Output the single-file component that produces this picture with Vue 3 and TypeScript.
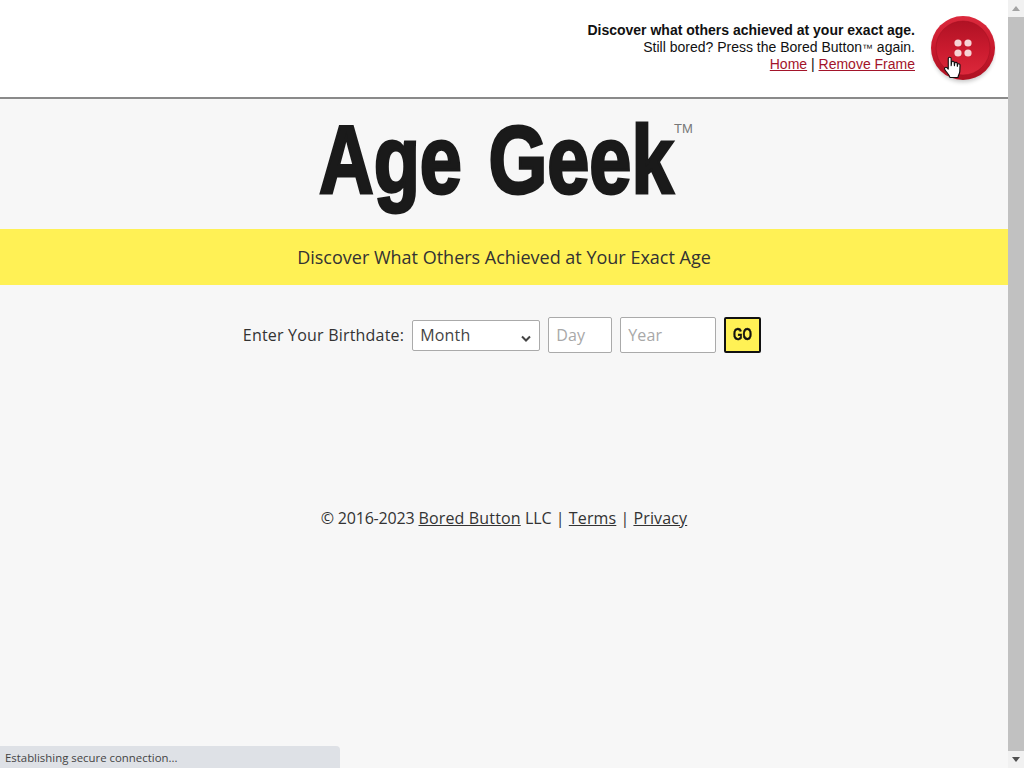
<script setup lang="ts">
const title: string = 'Age Geek'
</script>

<template>
  <div class="window">
    <div class="page">
      <header class="top">
        <div class="promo">
          <strong>Discover what others achieved at your exact age.</strong>
          <span>Still bored? Press the Bored Button<small>™</small> again.</span>
          <span><a href="#">Home</a> | <a href="#">Remove Frame</a></span>
        </div>
        <div class="btn-wrap">
          <svg class="red-btn" width="66" height="70" viewBox="0 0 66 70">
            <defs>
              <linearGradient id="rim" x1="0" y1="0" x2="0" y2="1">
                <stop offset="0%" stop-color="#dc2a3d" />
                <stop offset="50%" stop-color="#c8192d" />
                <stop offset="100%" stop-color="#ae1122" />
              </linearGradient>
              <linearGradient id="face" x1="0" y1="0" x2="0" y2="1">
                <stop offset="0%" stop-color="#b01224" />
                <stop offset="55%" stop-color="#cb1b2f" />
                <stop offset="100%" stop-color="#dc283b" />
              </linearGradient>
              <filter id="blur" x="-30%" y="-30%" width="160%" height="160%">
                <feGaussianBlur stdDeviation="2.2" />
              </filter>
            </defs>
            <circle cx="33" cy="35" r="31" fill="#000" opacity="0.22" filter="url(#blur)" />
            <circle cx="33" cy="32" r="32" fill="url(#rim)" />
            <circle cx="33" cy="32" r="27" fill="url(#face)" stroke="#a01020" stroke-width="1" stroke-opacity="0.5" />
            <circle cx="28" cy="27" r="3.6" fill="#f7d4d6" />
            <circle cx="38" cy="27" r="3.6" fill="#f7d4d6" />
            <circle cx="28" cy="37" r="3.6" fill="#f7d4d6" />
            <circle cx="38" cy="37" r="3.6" fill="#f7d4d6" />
            <g transform="translate(0.5 2) translate(20 50) scale(1.12) translate(-20 -50)">
              <path d="M18 41.5 C18 40 20.6 40 20.6 41.5 L20.6 48 L21 44.8 C21.3 43.6 23.3 43.8 23.3 45.2 L23.5 48 L23.8 45.6 C24.2 44.5 26 44.8 26 46 L26.1 48.5 L26.4 46.8 C26.8 45.8 28.5 46.1 28.5 47.4 L28.3 53 C28.2 55 27 56.5 26.6 58.5 L19.6 58.5 C19 56 16.6 54 15 51.5 C14 50 15.6 48.6 17 49.8 L18 51 Z" fill="#fff" stroke="#111" stroke-width="1" stroke-linejoin="round" />
            </g>
          </svg>
        </div>
      </header>

      <main class="content">
        <h1 class="logo"><span class="logo-text">{{ title }}</span><sup class="tm">TM</sup></h1>
        <div class="band">Discover What Others Achieved at Your Exact Age</div>
        <form class="birth" @submit.prevent>
          <label class="birth-label">Enter Your Birthdate:</label>
          <div class="select">
            <span>Month</span>
            <svg width="10" height="7" viewBox="0 0 10 7"><path d="M1 1.5 L5 5.5 L9 1.5" fill="none" stroke="#444" stroke-width="2" /></svg>
          </div>
          <input class="field day" placeholder="Day" />
          <input class="field year" placeholder="Year" />
          <button class="go" type="submit"><span>GO</span></button>
        </form>
        <footer class="foot"><span class="years">© 2016-2023</span> <a href="#">Bored Button</a> LLC | <a href="#">Terms</a> | <a href="#">Privacy</a></footer>
      </main>
    </div>

    <aside class="scrollbar">
      <svg width="16" height="17" viewBox="0 0 16 17"><path d="M4 11 L8 6 L12 11 Z" fill="#a3a3a3" /></svg>
      <div class="thumb"></div>
      <svg width="16" height="17" viewBox="0 0 16 17"><path d="M4 6 L12 6 L8 11 Z" fill="#505050" /></svg>
    </aside>

    <div class="status">Establishing secure connection...</div>
  </div>
</template>

<style>
html, body { margin: 0; padding: 0; overflow: hidden; }
</style>

<style scoped>
.window {
  position: relative;
  display: flex;
  width: 1024px;
  height: 768px;
  overflow: hidden;
  background: #f7f7f7;
}
.page { flex: 1; min-width: 0; display: flex; flex-direction: column; }
.top {
  box-sizing: border-box;
  height: 99px;
  flex: none;
  background: #fff;
  border-bottom: 2px solid #8a8a8a;
  display: flex;
  justify-content: flex-end;
  padding: 16px 12px 0 0;
  gap: 15px;
}
.promo {
  display: flex;
  flex-direction: column;
  align-items: flex-end;
  padding-top: 6px;
  font: 14px/17px "Liberation Sans", Arial, sans-serif;
  color: #111;
}
.promo small { font-size: 11px; line-height: 0; }
.promo a { color: #a3142a; }
.btn-wrap { width: 66px; height: 70px; }
.red-btn { display: block; }
.content { flex: 1; display: flex; flex-direction: column; align-items: center; font-family: "Open Sans", sans-serif; color: #333; }
.logo {
  margin: 0;
  height: 130px;
  position: relative;
  display: flex;
  justify-content: center;
  align-items: flex-start;
  width: 100%;
  box-sizing: border-box;
  padding-right: 16px;
}
.logo-text {
  display: block;
  margin-top: 5px;
  font: bold 97px/112px "Liberation Sans", sans-serif;
  color: #1a1a1a;
  -webkit-text-stroke: 3px #1a1a1a;
  word-spacing: 7px;
  white-space: nowrap;
  transform: scaleX(0.78);
  transform-origin: center;
}
.tm {
  position: absolute;
  left: 674px;
  top: 22px;
  font: 13px/15px "Liberation Sans", sans-serif;
  color: #777;
}
.band {
  width: 100%;
  height: 56px;
  background: #fff155;
  text-align: center;
  font-size: 18px;
  line-height: 56px;
  color: #333;
}
.birth {
  margin-top: 32px;
  margin-right: 4px;
  display: flex;
  align-items: center;
  gap: 8px;
  height: 36px;
  font-size: 16px;
  letter-spacing: 0.2px;
}
.select {
  box-sizing: border-box;
  width: 128px;
  height: 31px;
  border: 1px solid #aaa;
  border-radius: 2px;
  background: #fff;
  display: flex;
  align-items: center;
  justify-content: space-between;
  padding: 0 8px 0 7px;
  color: #444;
}
.select svg { margin-top: 7px; }
.field {
  box-sizing: border-box;
  height: 36px;
  border: 1px solid #aaa;
  border-radius: 2px;
  background: #fff;
  padding: 0 7px;
  font: 16px "Open Sans", sans-serif;
  letter-spacing: 0.2px;
  outline: none;
}
.field::placeholder { color: #a8a8a8; opacity: 1; }
.day { width: 64px; }
.year { width: 96px; }
.go {
  box-sizing: border-box;
  width: 37px;
  height: 36px;
  padding: 0;
  border: 2px solid #111;
  border-radius: 2px;
  background: #fff155;
  color: #111;
  font: bold 17px "Liberation Sans", sans-serif;
  letter-spacing: 0;
  -webkit-text-stroke: 0.4px #111;
}
.go span { display: block; transform: scaleX(0.72); }
.foot { margin-top: 154px; font-size: 16px; line-height: 22px; color: #333; }
.foot a { color: #333; letter-spacing: 0.15px; }
.years { letter-spacing: -0.2px; }
.scrollbar {
  width: 16px;
  flex: none;
  background: #f1f1f1;
  display: flex;
  flex-direction: column;
}
.scrollbar svg { flex: none; display: block; }
.thumb { flex: 1; background: #c1c1c1; }
.status {
  position: absolute;
  left: 0;
  bottom: 0;
  box-sizing: border-box;
  width: 340px;
  height: 22px;
  padding: 1px 5px 0;
  background: #dee1e6;
  border-top-right-radius: 4px;
  font: 11.4px/22px "Open Sans", "Noto Sans", sans-serif;
  color: #444;
}
</style>
